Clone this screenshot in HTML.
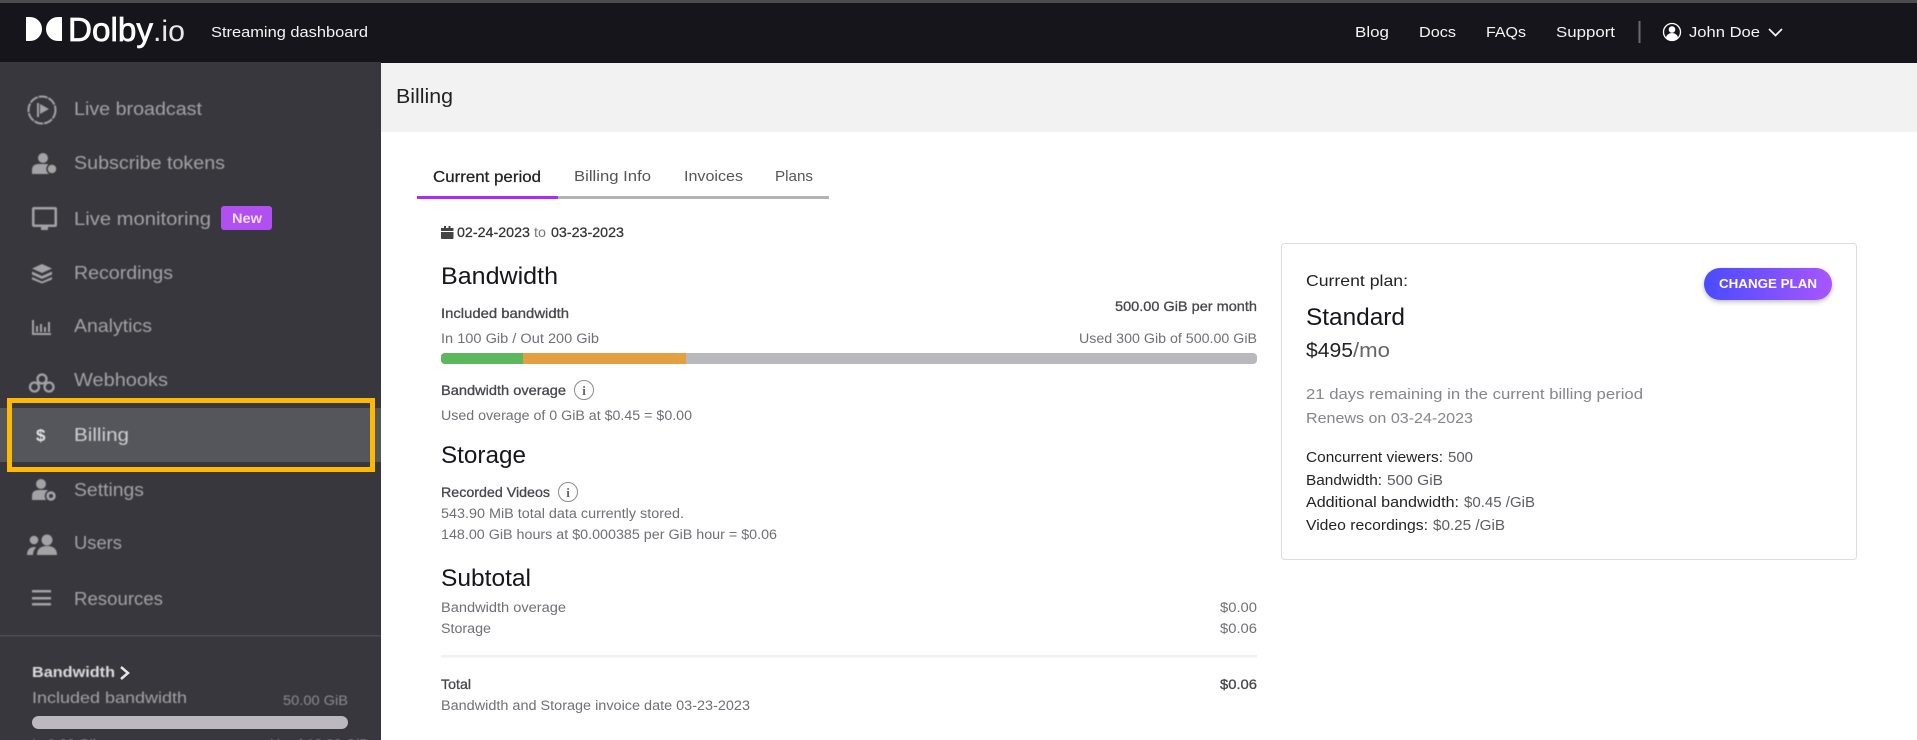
<!DOCTYPE html>
<html><head><meta charset="utf-8"><title>Billing</title>
<style>
html,body{margin:0;padding:0;background:#fff;width:1917px;height:740px;overflow:hidden}
svg{display:block}
text{font-family:"Liberation Sans",sans-serif;white-space:pre}
.soft{filter:blur(.45px)}
.nav{font-size:18px;fill:#a3a3a6}
.hd{font-size:15px;fill:#f4f4f4}
.tab{font-size:15px;fill:#555}
.h{font-size:24px;fill:#15151b}
.lab{font-size:14px;fill:#46464c;stroke:#46464c;stroke-width:.3}
.sm{font-size:13.5px;fill:#6f6f76}
.c{font-size:15px;fill:#222}
.v{font-size:15px;fill:#5d5d63}
</style></head><body>
<svg width="1917" height="740" viewBox="0 0 1917 740" xmlns="http://www.w3.org/2000/svg">
<rect width="1917" height="740" fill="#fff"/>
<!-- top header -->
<rect width="1917" height="3" fill="#4c4c4e"/>
<rect y="3" width="1917" height="60" fill="#15151b"/>
<path d="M26 17h4a12 12 0 0 1 0 24h-4z" fill="#fff"/>
<path d="M62 17h-4a12 12 0 0 0 0 24h4z" fill="#fff"/>
<text x="68" y="41" font-size="33" fill="#fff" stroke="#fff" stroke-width=".7" textLength="85" lengthAdjust="spacingAndGlyphs">Dolby</text>
<text x="153" y="41" font-size="30" fill="#e8e8e8" textLength="32" lengthAdjust="spacingAndGlyphs">.io</text>
<text class="hd" x="211" y="37" textLength="157" lengthAdjust="spacingAndGlyphs">Streaming dashboard</text>
<text class="hd" x="1355" y="37" textLength="34" lengthAdjust="spacingAndGlyphs">Blog</text>
<text class="hd" x="1419" y="37" textLength="37" lengthAdjust="spacingAndGlyphs">Docs</text>
<text class="hd" x="1486" y="37" textLength="40" lengthAdjust="spacingAndGlyphs">FAQs</text>
<text class="hd" x="1556" y="37" textLength="59" lengthAdjust="spacingAndGlyphs">Support</text>
<rect x="1638.5" y="21" width="2" height="22" fill="#6a6a6c"/>
<circle cx="1672" cy="32" r="8.5" fill="none" stroke="#fff" stroke-width="1.3"/>
<circle cx="1672" cy="29.5" r="3.3" fill="#fff"/>
<path d="M1666 38a6 5 0 0 1 12 0a8.5 8.5 0 0 1-12 0z" fill="#fff"/>
<text class="hd" x="1689" y="37" textLength="71" lengthAdjust="spacingAndGlyphs">John Doe</text>
<path d="M1769 29l6.500 6.500l6.500-6.500" fill="none" stroke="#f4f4f4" stroke-width="1.700"/>
<!-- sidebar -->
<rect y="62" width="381" height="678" fill="#38373d"/>
<rect y="408" width="381" height="54" fill="#55565b"/>
<rect x="9.500" y="400.500" width="363" height="69" fill="none" stroke="#ffb900" stroke-width="5"/>
<g class="soft">
<g fill="#a3a3a6">
<circle cx="42" cy="110" r="13.500" fill="none" stroke="#a3a3a6" stroke-width="2" stroke-dasharray="9 1"/>
<path d="M37 103h2v14h-2zM40 104l9 5-9 5z"/>
<circle cx="43" cy="158" r="5"/><path d="M32 174v-4q0-6 7-6h7q3 0 4 2v8z"/><circle cx="52" cy="169" r="5" stroke="#38373d" stroke-width="1.500"/>
<path d="M34 207h21a2 2 0 0 1 2 2v16a2 2 0 0 1-2 2h-7v3h-7v-3h-7a2 2 0 0 1-2-2v-16a2 2 0 0 1 2-2zM34.500 209.500v15h20v-15z" fill-rule="evenodd"/>
<path d="M42 264l10 4.500-10 4.500-10-4.500zM32 271.500l10 4.500 10-4.500v3l-10 4.500-10-4.500zM32 277l10 4.500 10-4.500v2.500l-10 4-10-4z"/>
<path d="M32 320h2v13h17v2h-19zM36 326h2v6h-2zM40 324h2v8h-2zM44 327h2v5h-2zM48 322h2v10h-2z"/>
<g fill="none" stroke="#a3a3a6" stroke-width="2.300"><circle cx="42" cy="379" r="4.500"/><circle cx="34.500" cy="387" r="4.500"/><circle cx="49" cy="387" r="4.500"/></g>
<text x="36" y="441" font-size="17" font-weight="bold" fill="#e4e4e6">$</text>
<circle cx="41" cy="484" r="5"/><path d="M32 500v-4q0-6 7-6h7q3 0 4 2v8z"/><circle cx="51" cy="496" r="5.500" fill="#a3a3a6" stroke="#38373d" stroke-width="1.500"/><circle cx="51" cy="496" r="2" fill="#38373d"/>
<circle cx="47" cy="540" r="5.500"/><circle cx="34" cy="540" r="4.300"/><path d="M37 555q0-9 10-9t10 9zM27 555q0-8 8-8l1 .5q-3 3-3 7.500z"/>
<path d="M32 590h19v2.500h-19zM32 597h19v2.500h-19zM32 603h19v2.500h-19z"/>
</g>
<text class="nav" x="74" y="115" textLength="128" lengthAdjust="spacingAndGlyphs">Live broadcast</text>
<text class="nav" x="74" y="169" textLength="151" lengthAdjust="spacingAndGlyphs">Subscribe tokens</text>
<text class="nav" x="74" y="225" textLength="137" lengthAdjust="spacingAndGlyphs">Live monitoring</text>
<text class="nav" x="74" y="279" textLength="99" lengthAdjust="spacingAndGlyphs">Recordings</text>
<text class="nav" x="74" y="332" textLength="78" lengthAdjust="spacingAndGlyphs">Analytics</text>
<text class="nav" x="74" y="386" textLength="94" lengthAdjust="spacingAndGlyphs">Webhooks</text>
<text class="nav" x="74" y="441" textLength="55" lengthAdjust="spacingAndGlyphs" style="fill:#cfcfd2">Billing</text>
<text class="nav" x="74" y="496" textLength="70" lengthAdjust="spacingAndGlyphs">Settings</text>
<text class="nav" x="74" y="549" textLength="48" lengthAdjust="spacingAndGlyphs">Users</text>
<text class="nav" x="74" y="605" textLength="89" lengthAdjust="spacingAndGlyphs">Resources</text>
<text x="32" y="677" font-size="15" font-weight="bold" fill="#dcdcdc" textLength="83" lengthAdjust="spacingAndGlyphs">Bandwidth</text>
<text x="32" y="703" font-size="16" fill="#a3a3a6" textLength="155" lengthAdjust="spacingAndGlyphs">Included bandwidth</text>
<text x="283" y="705" font-size="14" fill="#8c8c90" textLength="65" lengthAdjust="spacingAndGlyphs">50.00 GiB</text>
<text x="32" y="749" font-size="14" fill="#a3a3a6">In 0.00 Gib</text>
<text x="270" y="749" font-size="14" fill="#a3a3a6">Used 10.00 GiB</text>
</g>
<rect x="221" y="206" width="51" height="24" rx="3" fill="#b14ff0"/>
<text x="232" y="223" font-size="14" font-weight="bold" fill="#f0def9" textLength="30" lengthAdjust="spacingAndGlyphs">New</text>
<rect y="635" width="381" height="1.500" fill="#4b4b51"/>
<path d="M121 667l7 6-7 6" fill="none" stroke="#e6e6e6" stroke-width="2.500"/>
<rect x="32" y="716" width="316" height="13" rx="6.500" fill="#bbb9bf"/>
<!-- title bar -->
<rect x="381" y="63" width="1536" height="69" fill="#f2f2f2"/>
<text x="396" y="103" font-size="20" fill="#222" textLength="57" lengthAdjust="spacingAndGlyphs">Billing</text>
<!-- tabs -->
<text x="433" y="182" font-size="16" fill="#222" stroke="#222" stroke-width=".25" textLength="108" lengthAdjust="spacingAndGlyphs">Current period</text>
<text class="tab" x="574" y="181" textLength="77" lengthAdjust="spacingAndGlyphs">Billing Info</text>
<text class="tab" x="684" y="181" textLength="59" lengthAdjust="spacingAndGlyphs">Invoices</text>
<text class="tab" x="775" y="181" textLength="38" lengthAdjust="spacingAndGlyphs">Plans</text>
<rect x="558" y="196" width="271" height="3" fill="#b3b3b3"/>
<rect x="417" y="196" width="141" height="3" fill="#a92cff"/>
<!-- main left -->
<path d="M441 228h3v-2h2v2h2.500v-2h2v2h3v3h-12.500zM441 232h12.500v6a1 1 0 0 1-1 1h-10.500a1 1 0 0 1-1-1z" fill="#444"/>
<text x="457" y="237" font-size="14" fill="#333" stroke="#333" stroke-width=".25" textLength="73" lengthAdjust="spacingAndGlyphs">02-24-2023</text>
<text x="534" y="237" font-size="14" fill="#777" textLength="12" lengthAdjust="spacingAndGlyphs">to</text>
<text x="551" y="237" font-size="14" fill="#333" stroke="#333" stroke-width=".25" textLength="73" lengthAdjust="spacingAndGlyphs">03-23-2023</text>
<text class="h" x="441" y="284" textLength="117" lengthAdjust="spacingAndGlyphs">Bandwidth</text>
<text class="lab" x="441" y="318" textLength="128" lengthAdjust="spacingAndGlyphs">Included bandwidth</text>
<text class="lab" x="1115" y="311" textLength="142" lengthAdjust="spacingAndGlyphs">500.00 GiB per month</text>
<text class="sm" x="441" y="343" textLength="158" lengthAdjust="spacingAndGlyphs">In 100 Gib / Out 200 Gib</text>
<text class="sm" x="1079" y="343" textLength="178" lengthAdjust="spacingAndGlyphs">Used 300 Gib of 500.00 GiB</text>
<rect x="441" y="353" width="816" height="11" rx="4" fill="#b9b8bc"/>
<path d="M445 353h78v11h-78a4 4 0 0 1-4-4v-3a4 4 0 0 1 4-4z" fill="#5cb85c"/>
<rect x="523" y="353" width="163" height="11" fill="#e4a040"/>
<text class="lab" x="441" y="395" textLength="125" lengthAdjust="spacingAndGlyphs">Bandwidth overage</text>
<circle cx="584" cy="390" r="9.500" fill="none" stroke="#8a8a8a" stroke-width="1"/>
<text x="584" y="395" font-size="13" font-weight="bold" fill="#666" text-anchor="middle" style="font-family:'Liberation Serif',serif">i</text>
<text class="sm" x="441" y="420" textLength="251" lengthAdjust="spacingAndGlyphs">Used overage of 0 GiB at $0.45 = $0.00</text>
<text class="h" x="441" y="463" textLength="85" lengthAdjust="spacingAndGlyphs">Storage</text>
<text class="lab" x="441" y="497" textLength="109" lengthAdjust="spacingAndGlyphs">Recorded Videos</text>
<circle cx="568" cy="492" r="9.500" fill="none" stroke="#8a8a8a" stroke-width="1"/>
<text x="568" y="497" font-size="13" font-weight="bold" fill="#666" text-anchor="middle" style="font-family:'Liberation Serif',serif">i</text>
<text class="sm" x="441" y="518" textLength="243" lengthAdjust="spacingAndGlyphs">543.90 MiB total data currently stored.</text>
<text class="sm" x="441" y="539" textLength="336" lengthAdjust="spacingAndGlyphs">148.00 GiB hours at $0.000385 per GiB hour = $0.06</text>
<text class="h" x="441" y="586" textLength="90" lengthAdjust="spacingAndGlyphs">Subtotal</text>
<text class="sm" x="441" y="612" textLength="125" lengthAdjust="spacingAndGlyphs">Bandwidth overage</text>
<text class="sm" x="1220" y="612" textLength="37" lengthAdjust="spacingAndGlyphs">$0.00</text>
<text class="sm" x="441" y="633" textLength="50" lengthAdjust="spacingAndGlyphs">Storage</text>
<text class="sm" x="1220" y="633" textLength="37" lengthAdjust="spacingAndGlyphs">$0.06</text>
<rect x="441" y="655" width="816" height="2.500" fill="#f0f0f0"/>
<text class="lab" x="441" y="689" textLength="30" lengthAdjust="spacingAndGlyphs">Total</text>
<text class="lab" x="1220" y="689" textLength="37" lengthAdjust="spacingAndGlyphs">$0.06</text>
<text class="sm" x="441" y="710" textLength="309" lengthAdjust="spacingAndGlyphs">Bandwidth and Storage invoice date 03-23-2023</text>
<!-- plan card -->
<rect x="1281.500" y="243.500" width="575" height="316" rx="3" fill="#fff" stroke="#ddd" stroke-width="1"/>
<text x="1306" y="286" font-size="16" fill="#222" textLength="102" lengthAdjust="spacingAndGlyphs">Current plan:</text>
<defs><linearGradient id="g" x1="0" x2="1" y1="0" y2="0"><stop offset="0" stop-color="#4a4cff"/><stop offset="1" stop-color="#a855ff"/></linearGradient>
<filter id="s" x="-10%" y="-20%" width="120%" height="160%"><feDropShadow dx="0" dy="2" stdDeviation="2.500" flood-color="#000" flood-opacity=".25"/></filter></defs>
<rect x="1704" y="268" width="128" height="32" rx="16" fill="url(#g)" filter="url(#s)"/>
<text x="1719" y="288" font-size="13" font-weight="bold" fill="#fff" textLength="98" lengthAdjust="spacingAndGlyphs">CHANGE PLAN</text>
<text x="1306" y="325" font-size="24" fill="#15151b" textLength="99" lengthAdjust="spacingAndGlyphs">Standard</text>
<text x="1306" y="357" font-size="20" fill="#222" textLength="47" lengthAdjust="spacingAndGlyphs">$495</text>
<text x="1353" y="357" font-size="20" fill="#666" textLength="37" lengthAdjust="spacingAndGlyphs">/mo</text>
<text x="1306" y="399" font-size="15" fill="#85858b" textLength="337" lengthAdjust="spacingAndGlyphs">21 days remaining in the current billing period</text>
<text x="1306" y="423" font-size="15" fill="#85858b" textLength="167" lengthAdjust="spacingAndGlyphs">Renews on 03-24-2023</text>
<text class="c" x="1306" y="462" textLength="137" lengthAdjust="spacingAndGlyphs">Concurrent viewers:</text>
<text class="v" x="1448" y="462" textLength="25" lengthAdjust="spacingAndGlyphs">500</text>
<text class="c" x="1306" y="485" textLength="76" lengthAdjust="spacingAndGlyphs">Bandwidth:</text>
<text class="v" x="1387" y="485" textLength="56" lengthAdjust="spacingAndGlyphs">500 GiB</text>
<text class="c" x="1306" y="507" textLength="153" lengthAdjust="spacingAndGlyphs">Additional bandwidth:</text>
<text class="v" x="1464" y="507" textLength="71" lengthAdjust="spacingAndGlyphs">$0.45 /GiB</text>
<text class="c" x="1306" y="530" textLength="122" lengthAdjust="spacingAndGlyphs">Video recordings:</text>
<text class="v" x="1433" y="530" textLength="72" lengthAdjust="spacingAndGlyphs">$0.25 /GiB</text>
</svg>
</body></html>
